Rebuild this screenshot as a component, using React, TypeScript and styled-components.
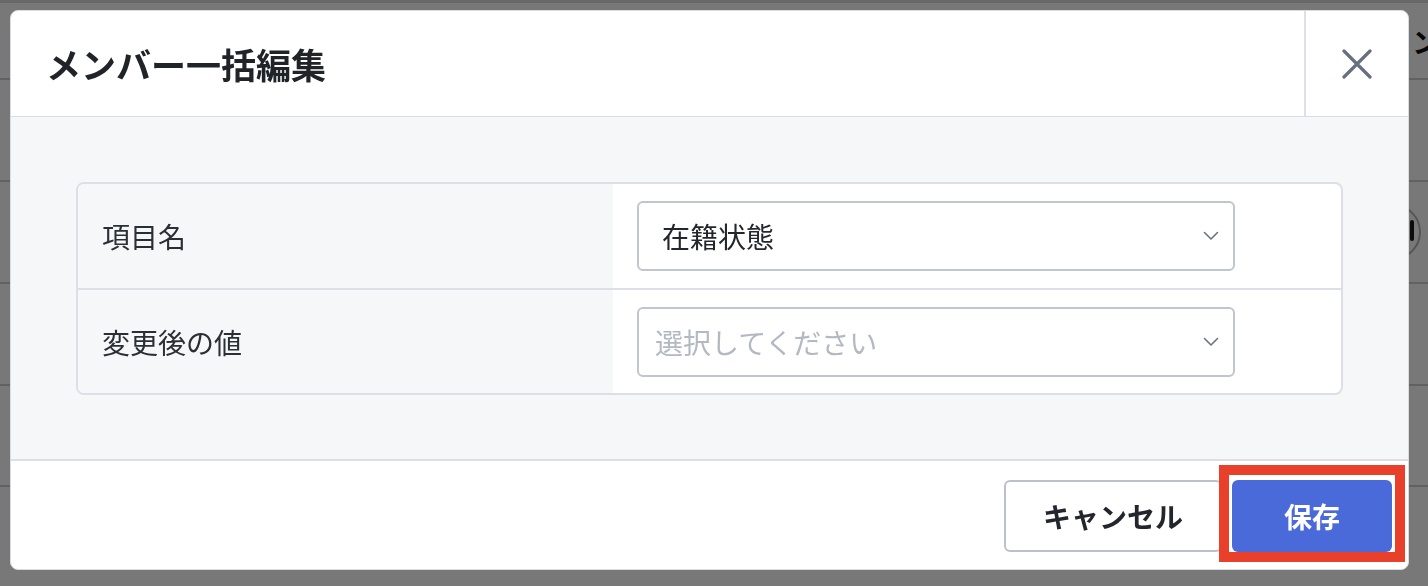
import React from 'react';
import styled, { createGlobalStyle } from 'styled-components';

const GlobalStyle = createGlobalStyle`
  html, body {
    margin: 0;
    padding: 0;
    width: 1428px;
    height: 586px;
    overflow: hidden;
    font-family: "Noto Sans CJK JP", "Noto Sans", sans-serif;
  }
  * {
    box-sizing: border-box;
  }
`;

// page behind the dialog
const Page = styled.div`
  width: 1428px;
  height: 586px;
  background: #ffffff;
  border-top: 3px solid #dddddd;
  overflow: hidden;
`;

const PageRow = styled.div<{ height: number }>`
  display: flex;
  justify-content: flex-end;
  align-items: center;
  height: ${({ height }) => height}px;
  border-bottom: 2px solid #cfcfcf;
`;

const HeaderCell = styled.div`
  font-size: 28px;
  font-weight: 700;
  line-height: 1.2;
  color: #111111;
  margin-right: -12px;
  margin-top: 2px;
`;

const RowAction = styled.div`
  width: 56px;
  height: 56px;
  border-radius: 50%;
  border: 2px solid #b5b5b5;
  margin-right: 7px;
  display: flex;
`;

const Overlay = styled.div`
  position: fixed;
  inset: 0;
  background: rgba(0, 0, 0, 0.53);
`;

const Modal = styled.div`
  position: fixed;
  top: 10px;
  left: 10px;
  width: 1399px;
  height: 560px;
  background: #ffffff;
  border: 1px solid #d8dce4;
  border-radius: 8px;
  display: flex;
  flex-direction: column;
  overflow: hidden;
`;

const ModalHeader = styled.div`
  display: flex;
  align-items: stretch;
  height: 106px;
  border-bottom: 1px solid #d8dce4;
`;

const Title = styled.h2`
  flex: 1;
  margin: 0;
  padding-left: 35px;
  display: flex;
  align-items: center;
  font-size: 35px;
  font-weight: 700;
  color: #202328;
`;

const CloseButton = styled.button`
  width: 104px;
  border: none;
  border-left: 2px solid #dde0e7;
  background: transparent;
  display: flex;
  align-items: center;
  justify-content: center;
  padding: 0;
  cursor: pointer;
`;

const ModalBody = styled.div`
  height: 342px;
  background: #f6f7f9;
  padding: 65px 65px 65px 65px;
`;

const FieldTable = styled.div`
  border: 2px solid #dcdfe6;
  border-radius: 8px;
  overflow: hidden;
  background: #ffffff;
`;

const FieldRow = styled.div<{ last?: boolean }>`
  display: grid;
  grid-template-columns: 535px 1fr;
  height: ${({ last }) => (last ? 103 : 106)}px;
  border-bottom: ${({ last }) => (last ? 'none' : '2px solid #dcdfe6')};
`;

const FieldLabel = styled.div`
  background: #f6f7f9;
  display: flex;
  align-items: center;
  padding-left: 24px;
  font-size: 28px;
  color: #2a2e35;
`;

const FieldValue = styled.div`
  display: flex;
  align-items: center;
  padding-left: 24px;
`;

const Select = styled.div`
  width: 598px;
  height: 70px;
  border: 2px solid #c1c5cf;
  border-radius: 6px;
  background: #ffffff;
  display: flex;
  align-items: center;
  justify-content: space-between;
  padding-right: 14px;
`;

const SelectText = styled.span<{ placeholder?: boolean }>`
  font-size: 28px;
  padding-left: ${({ placeholder }) => (placeholder ? 16 : 23)}px;
  color: ${({ placeholder }) => (placeholder ? '#b3b8c3' : '#23262c')};
`;

const ModalFooter = styled.div`
  flex: 1;
  border-top: 2px solid #dcdfe6;
  display: flex;
  justify-content: flex-end;
  align-items: center;
  gap: 10px;
  padding: 0 16px 0 0;
`;

const Button = styled.button<{ primary?: boolean }>`
  height: 72px;
  width: ${({ primary }) => (primary ? 160 : 218)}px;
  border-radius: 6px;
  font-family: "Noto Sans CJK JP", "Noto Sans", sans-serif;
  font-size: 28px;
  font-weight: 700;
  cursor: pointer;
  border: ${({ primary }) => (primary ? 'none' : '2px solid #bcc0cb')};
  background: ${({ primary }) => (primary ? '#4a6ad9' : '#ffffff')};
  color: ${({ primary }) => (primary ? '#ffffff' : '#23262c')};
  margin-top: 2px;
`;

// red annotation frame drawn over the save button
const Highlight = styled.div`
  position: fixed;
  left: 1219px;
  top: 465px;
  width: 186px;
  height: 97px;
  border: 10px solid #e8402b;
  pointer-events: none;
`;

const Chevron = () => (
  <svg width="16" height="10" viewBox="0 0 16 10" fill="none">
    <path d="M1.5 1.5L8 8L14.5 1.5" stroke="#6b7280" strokeWidth="1.6" strokeLinecap="round" strokeLinejoin="round" />
  </svg>
);

const App: React.FC = () => {
  return (
    <>
      <GlobalStyle />
      <Page>
        <PageRow height={77}>
          <HeaderCell>アクション</HeaderCell>
        </PageRow>
        <PageRow height={102} />
        <PageRow height={102}>
          <RowAction>
            <svg width="52" height="52" viewBox="0 0 52 52">
              <rect x="43" y="14" width="4" height="21" rx="2" fill="#1b1b1b" />
            </svg>
          </RowAction>
        </PageRow>
        <PageRow height={102} />
        <PageRow height={101} />
      </Page>
      <Overlay />
      <Modal>
        <ModalHeader>
          <Title>メンバー一括編集</Title>
          <CloseButton aria-label="閉じる">
            <svg width="30" height="30" viewBox="0 0 30 30" fill="none">
              <path d="M2 2L28 28M28 2L2 28" stroke="#687080" strokeWidth="3.2" strokeLinecap="round" />
            </svg>
          </CloseButton>
        </ModalHeader>
        <ModalBody>
          <FieldTable>
            <FieldRow>
              <FieldLabel>項目名</FieldLabel>
              <FieldValue>
                <Select>
                  <SelectText>在籍状態</SelectText>
                  <Chevron />
                </Select>
              </FieldValue>
            </FieldRow>
            <FieldRow last>
              <FieldLabel>変更後の値</FieldLabel>
              <FieldValue>
                <Select>
                  <SelectText placeholder>選択してください</SelectText>
                  <Chevron />
                </Select>
              </FieldValue>
            </FieldRow>
          </FieldTable>
        </ModalBody>
        <ModalFooter>
          <Button>キャンセル</Button>
          <Button primary>保存</Button>
        </ModalFooter>
      </Modal>
      <Highlight />
    </>
  );
};

export default App;
